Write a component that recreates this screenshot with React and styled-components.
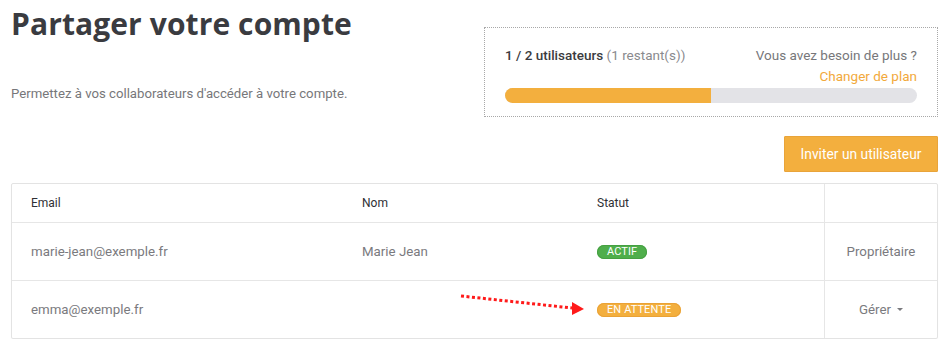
import React from 'react';
import styled, { createGlobalStyle } from 'styled-components';

const Global = createGlobalStyle`
  body {
    margin: 0;
    background: #fff;
    font-family: Roboto, "Liberation Sans", sans-serif;
  }
`;

const Page = styled.div`
  width: 950px;
  padding: 0 12px 0 11px;
  box-sizing: border-box;
`;

const Top = styled.div`
  display: flex;
  justify-content: space-between;
  align-items: flex-start;
`;

const Intro = styled.div`
  padding-top: 4px;
`;

const Title = styled.h1`
  margin: 0;
  font-family: "Open Sans", sans-serif;
  font-weight: 700;
  font-size: 30px;
  line-height: 40px;
  color: #3a3b40;
  letter-spacing: 0.1px;
`;

const Lead = styled.p`
  margin: 42px 0 0;
  font-size: 13.2px;
  color: #77777a;
`;

const Usage = styled.div`
  margin-top: 27px;
  width: 454px;
  height: 90px;
  box-sizing: border-box;
  border: 1px dotted #a8a8a8;
  padding: 19px 20px 0;
`;

const UsageHead = styled.div`
  display: flex;
  justify-content: space-between;
  font-size: 13.5px;
  line-height: 17px;
`;

const Count = styled.div`
  color: #3a3b40;
  b {
    font-weight: 500;
  }
  span {
    color: #8a8a8e;
  }
`;

const More = styled.div`
  text-align: right;
  color: #77777a;
  a {
    display: block;
    margin-top: 4px;
    color: #f2a93b;
    text-decoration: none;
  }
`;

const Track = styled.div`
  margin-top: 3px;
  height: 15px;
  border-radius: 8px;
  background: #e3e3e7;
  overflow: hidden;
`;

const Fill = styled.div`
  height: 100%;
  background: #f3af3e;
`;

const Actions = styled.div`
  display: flex;
  justify-content: flex-end;
  margin-top: 19px;
`;

const Button = styled.button`
  width: 154px;
  height: 36px;
  border: 1px solid #e9a43a;
  background: #f3af3e;
  color: #fff;
  font-family: Roboto, sans-serif;
  font-size: 13.8px;
  border-radius: 1px;
  cursor: pointer;
`;

const Table = styled.div`
  position: relative;
  margin-top: 11px;
  border: 1px solid #e3e3e3;
  border-radius: 2px;
  box-shadow: 0 1px 1px rgba(0, 0, 0, 0.06);
`;

const Row = styled.div`
  display: grid;
  grid-template-columns: 331px 235px 246px 1fr;
  height: ${(p) => (p.$head ? '38px' : '57px')};
  border-top: ${(p) => (p.$head ? 'none' : '1px solid #e6e6e6')};
`;

const Cell = styled.div`
  display: flex;
  align-items: center;
  padding-left: ${(p) => (p.$center ? '0' : '19px')};
  justify-content: ${(p) => (p.$center ? 'center' : 'flex-start')};
  border-left: ${(p) => (p.$center ? '1px solid #e6e6e6' : 'none')};
  font-size: ${(p) => (p.$head ? '12px' : '13.3px')};
  font-weight: 400;
  color: ${(p) => (p.$head ? '#2f3034' : '#7a7a7e')};
`;

const Badge = styled.span`
  display: inline-block;
  height: 14px;
  line-height: 14px;
  padding: 0 10px;
  border-radius: 8px;
  font-size: 11px;
  color: #fff;
  letter-spacing: 0.1px;
  background: ${(p) => p.$bg};
  box-shadow: inset 0 0 0 1px ${(p) => p.$edge};
`;

const Caret = styled.span`
  display: inline-block;
  margin-left: 6px;
  border-left: 3px solid transparent;
  border-right: 3px solid transparent;
  border-top: 3px solid #7a7a7e;
  vertical-align: middle;
`;

const Arrow = styled.svg`
  position: absolute;
  left: 436px;
  top: 107px;
  pointer-events: none;
`;

const STATUS = {
  actif: { label: 'ACTIF', bg: '#4fae4b', edge: '#46a042' },
  attente: { label: 'EN ATTENTE', bg: '#f3af3e', edge: '#eaa236' },
};

const users = [
  { email: 'marie-jean@exemple.fr', name: 'Marie Jean', status: 'actif', action: 'Propriétaire' },
  { email: 'emma@exemple.fr', name: '', status: 'attente', action: 'Gérer', menu: true },
];

export default function App() {
  const used = 1;
  const total = 2;
  return (
    <Page>
      <Global />
      <Top>
        <Intro>
          <Title>Partager votre compte</Title>
          <Lead>Permettez à vos collaborateurs d'accéder à votre compte.</Lead>
        </Intro>
        <Usage>
          <UsageHead>
            <Count>
              <b>{used} / {total} utilisateurs</b> <span>({total - used} restant(s))</span>
            </Count>
            <More>
              Vous avez besoin de plus ?
              <a href="#plan">Changer de plan</a>
            </More>
          </UsageHead>
          <Track>
            <Fill style={{ width: `${(used / total) * 100}%` }} />
          </Track>
        </Usage>
      </Top>
      <Actions>
        <Button>Inviter un utilisateur</Button>
      </Actions>
      <Table>
        <Row $head>
          <Cell $head>Email</Cell>
          <Cell $head>Nom</Cell>
          <Cell $head>Statut</Cell>
          <Cell $head $center />
        </Row>
        {users.map((u) => (
          <Row key={u.email}>
            <Cell>{u.email}</Cell>
            <Cell>{u.name}</Cell>
            <Cell>
              <Badge $bg={STATUS[u.status].bg} $edge={STATUS[u.status].edge}>
                {STATUS[u.status].label}
              </Badge>
            </Cell>
            <Cell $center>
              {u.action}
              {u.menu && <Caret />}
            </Cell>
          </Row>
        ))}
        <Arrow width="140" height="24" viewBox="0 0 140 24">
          <line x1="13" y1="5" x2="124" y2="17" stroke="#ff1a1a" strokeWidth="3" strokeDasharray="3 2.5" />
          <polygon points="124,11 136,18 124,24" fill="#ff1a1a" />
        </Arrow>
      </Table>
    </Page>
  );
}
